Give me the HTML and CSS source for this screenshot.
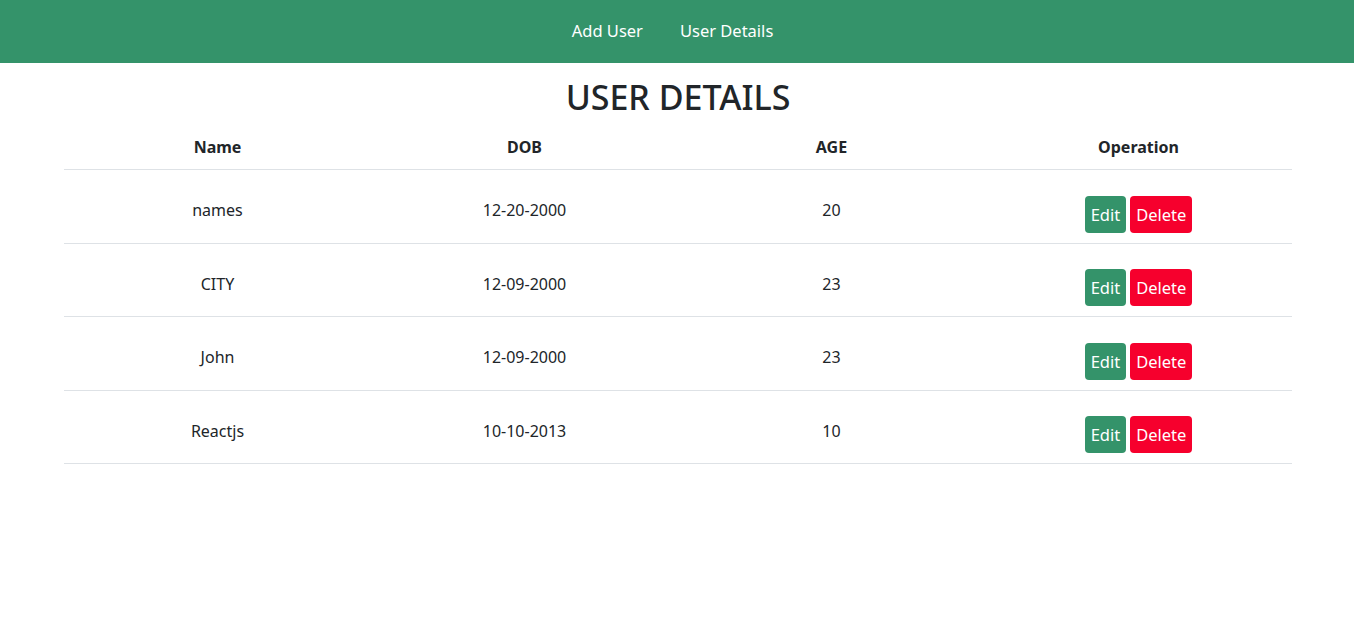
FILE: index.html
```html
<!DOCTYPE html>
<html>
<head>
<meta charset="utf-8">
<link rel="stylesheet" href="styles.css">
</head>
<body>
<nav class="navbar">
  <a class="nav-link" href="#">Add User</a>
  <a class="nav-link" href="#">User Details</a>
</nav>
<main class="content">
  <h1 class="title">USER DETAILS</h1>
  <div class="table">
    <div class="row head">
      <div class="cell">Name</div>
      <div class="cell">DOB</div>
      <div class="cell">AGE</div>
      <div class="cell">Operation</div>
    </div>
    <div class="row">
      <div class="cell">names</div>
      <div class="cell">12-20-2000</div>
      <div class="cell">20</div>
      <div class="cell ops"><button class="btn edit">Edit</button><button class="btn del">Delete</button></div>
    </div>
    <div class="row">
      <div class="cell">CITY</div>
      <div class="cell">12-09-2000</div>
      <div class="cell">23</div>
      <div class="cell ops"><button class="btn edit">Edit</button><button class="btn del">Delete</button></div>
    </div>
    <div class="row">
      <div class="cell">John</div>
      <div class="cell">12-09-2000</div>
      <div class="cell">23</div>
      <div class="cell ops"><button class="btn edit">Edit</button><button class="btn del">Delete</button></div>
    </div>
    <div class="row">
      <div class="cell">Reactjs</div>
      <div class="cell">10-10-2013</div>
      <div class="cell">10</div>
      <div class="cell ops"><button class="btn edit">Edit</button><button class="btn del">Delete</button></div>
    </div>
  </div>
</main>
</body>
</html>
```
FILE: styles.css
```css
* { box-sizing: border-box; }
body {
  margin: 0;
  font-family: "Noto Sans", "Open Sans", sans-serif;
  color: #212529;
  background: #fff;
  font-size: 16px;
}
.navbar {
  height: 63px;
  background: #34936a;
  display: flex;
  justify-content: center;
  align-items: center;
  gap: 37px;
  padding-right: 9px;
  padding-bottom: 2px;
}
.nav-link {
  color: #fff;
  text-decoration: none;
  font-size: 16.5px;
}
.content {
  padding: 0 62px 0 64px;
}
.title {
  margin: 12px 0 0;
  text-align: center;
  font-size: 34px;
  font-weight: 500;
  line-height: 44px;
  letter-spacing: 0;
}
.table {
  margin-top: 12px;
}
.row {
  display: grid;
  grid-template-columns: repeat(4, 1fr);
  border-bottom: 1px solid #dee2e6;
  height: 73.5px;
  align-items: center;
}
.row.head {
  height: 39px;
  font-weight: 700;
  align-items: start;
  padding-top: 4px;
}
.cell {
  text-align: center;
  line-height: 24px;
}
.row:not(.head) .cell {
  margin-top: 8px;
}
.row:not(.head) .cell.ops {
  margin-top: 16px;
  display: flex;
  justify-content: center;
  gap: 4px;
}
.btn {
  border: none;
  color: #fff;
  font-family: inherit;
  font-size: 16.5px;
  height: 37px;
  padding: 0 6px;
  border-radius: 4px;
  cursor: pointer;
}
.edit { background: #34936a; }
.del { background: #f6002d; }
```
